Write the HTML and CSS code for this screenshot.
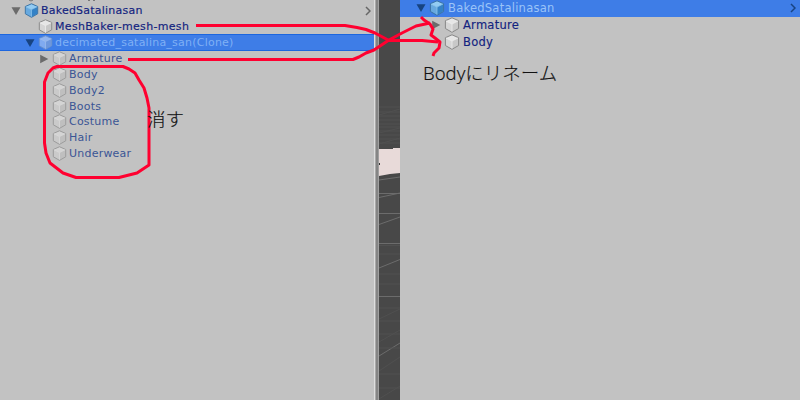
FILE: index.html
```
<!DOCTYPE html>
<html lang="ja">
<head>
<meta charset="utf-8">
<title>Hierarchy</title>
<link rel="stylesheet" href="styles.css">
</head>
<body>
<svg width="0" height="0" class="defs">
  <symbol id="cube" viewBox="0 0 16 16"><path class="body" d="M8 .8 14.6 3.7V11.5L8 15.3 1.4 11.5V3.7Z"/><path class="top" d="M8 1 14.2 3.9 8 7 1.8 3.9Z"/><path class="side" d="M8 7 14.2 3.9V11.3L8 14.9Z"/><path class="edge" d="M8 .8 14.6 3.7V11.5L8 15.3 1.4 11.5V3.7Z"/><path class="line" d="M2 4 8 7 14 4M8 7V14.6"/></symbol>
  <symbol id="down" viewBox="0 0 10 10"><path d="M.5 1.2H9.5L5 9Z"/></symbol>
  <symbol id="right" viewBox="0 0 10 10"><path d="M1.2.8V9.2L9.3 5Z"/></symbol>
  <symbol id="chevron" viewBox="0 0 6 10"><path d="M1 1 5 5 1 9"/></symbol>
</svg>
<main class="screen">
  <section class="panel left">
    <div class="row l0"><svg class="arrow"><use href="#down"/></svg><svg class="cube prefab"><use href="#cube"/></svg><span>BakedSatalinasan</span><svg class="chevron"><use href="#chevron"/></svg></div>
    <div class="row l1"><i class="arrow"></i><svg class="cube"><use href="#cube"/></svg><span class="mesh">MeshBaker-mesh-mesh</span></div>
    <div class="row l1 selected dim"><svg class="arrow"><use href="#down"/></svg><svg class="cube"><use href="#cube"/></svg><span class="clone">decimated_satalina_san(Clone)</span></div>
    <div class="row l2 dim"><svg class="arrow"><use href="#right"/></svg><svg class="cube"><use href="#cube"/></svg><span>Armature</span></div>
    <div class="row l2 dim"><i class="arrow"></i><svg class="cube"><use href="#cube"/></svg><span>Body</span></div>
    <div class="row l2 dim"><i class="arrow"></i><svg class="cube"><use href="#cube"/></svg><span>Body2</span></div>
    <div class="row l2 dim"><i class="arrow"></i><svg class="cube"><use href="#cube"/></svg><span>Boots</span></div>
    <div class="row l2 dim"><i class="arrow"></i><svg class="cube"><use href="#cube"/></svg><span>Costume</span></div>
    <div class="row l2 dim"><i class="arrow"></i><svg class="cube"><use href="#cube"/></svg><span>Hair</span></div>
    <div class="row l2 dim"><i class="arrow"></i><svg class="cube"><use href="#cube"/></svg><span>Underwear</span></div>
  </section>
  <div class="divider"></div>
  <svg class="scene" width="21" height="400" viewBox="379 0 21 400">
    <path class="grid faint" d="M379 107H400M379 112H400M379 116H400M379 120H400M379 124H400M379 127H400M379 131H400M379 135H400M379 139H400M379 143H400M379 115 400 109M379 133 400 128M379 144 400 138"/>
    <path class="plane" d="M379 149H393V148H400V173L390 174 379 176Z"/>
    <path class="mark" d="M379 161v2h1v2h-1z"/>
    <path class="grid" d="M379 180 400 177M379 193.500H400M379 197.500 400 193M379 213.500H400M379 224.500 400 217M379 243.500H400M379 268 400 259.500M379 296.500H400M379 356 400 343"/>
    <path class="grid faint" d="M379 245.500H400M379 254H400M379 274H400M379 284H400M379 308H400M379 321H400M379 334H400M379 348H400M379 374H400M379 388H400M379 319 400 309M379 342 400 330M379 371 400 357M379 399 400 386"/>
  </svg>
  <section class="panel right">
    <div class="row l0 selected"><svg class="arrow"><use href="#down"/></svg><svg class="cube prefab"><use href="#cube"/></svg><span>BakedSatalinasan</span><svg class="chevron"><use href="#chevron"/></svg></div>
    <div class="row l1"><svg class="arrow"><use href="#right"/></svg><svg class="cube"><use href="#cube"/></svg><span>Armature</span></div>
    <div class="row l1"><i class="arrow"></i><svg class="cube"><use href="#cube"/></svg><span>Body</span></div>
  </section>
  <svg class="ink" viewBox="0 0 800 400">
    <path class="cut" d="M29 0 31 1 33 0M88 .5H90M93 .5H95"/>
    <path d="M196 25.500H345L357 27.500 366 29.500 375 33 389 40.500H422L438 42"/>
    <path d="M128 59.500H353L359 57 366 53 374 50 389 40 402 33 416 26 430 23"/>
    <path d="M421 17 424 20 430 24 433 29 431 35 435 38 440 42 439 48 434 53 433 56"/>
    <path d="M57 66.500H123L129 69 135 73 139 80 144 88 147 98 149 108V165L137 173 119 177.500H76L63 173 50 163 46 153 44.500 143V82L48 73 53 68Z"/>
  </svg>
  <p class="note erase">消す</p>
  <p class="note rename">Bodyにリネーム</p>
</main>
</body>
</html>
```
FILE: styles.css
```
body { margin: 0; }
.defs { position: absolute; }
.screen { position: relative; display: flex; width: 800px; height: 400px; overflow: hidden; background: #c2c2c2; font-family: "DejaVu Sans", sans-serif; }
.panel { box-sizing: border-box; height: 400px; }
.left { width: 374px; padding-top: 3px; font-size: 11px; letter-spacing: .22px; }
.right { width: 400px; font-size: 11.500px; letter-spacing: .25px; }
.row { display: flex; align-items: center; height: 15.850px; box-sizing: border-box; color: #12237f; white-space: nowrap; -webkit-text-stroke: .15px; }
.right .row { height: 16.700px; }
.row.l0 { padding-left: 11px; }
.row.l1 { padding-left: 25px; }
.row.l2 { padding-left: 39px; }
.right .row.l0 { padding-left: 16px; }
.right .row.l1 { padding-left: 31px; }
.arrow { width: 10px; height: 10px; flex: none; fill: #6b6b6b; }
.cube { width: 15px; height: 15px; flex: none; margin: 0 2px 0 3px; }
.right .cube { width: 16px; height: 16px; margin-right: 3px; }
.body { fill: var(--face, #d5d5d5); }
.top { fill: var(--top, #e6e6e6); }
.side { fill: var(--side, #c8c8c8); }
.edge { fill: none; stroke: var(--edge, #888); stroke-width: 1; }
.line { fill: none; stroke: var(--line, #ededed); stroke-width: .8; }
.prefab { --face: #67a9df; --top: #93ccf3; --side: #3482c6; --edge: #3b72a4; --line: #8dc4ea; }
.dim { color: #3a5595; -webkit-text-stroke: 0; }
.dim .cube { --face: #cacaca; --top: #d4d4d4; --side: #bfbfbf; --edge: #999; --line: #dadada; }
.row.selected { background: #3e7de7; color: #9bc4f8; -webkit-text-stroke: 0; }
.left .selected { height: 17px; margin: -.5px 0 -.6px; border-top: 1px solid #1c66df; border-bottom: 1px solid #1c66df; color: #80b0f5; }
.selected .arrow { fill: #174381; }
.selected.dim .cube { --face: #80aaf0; --top: #91b5f0; --side: #6d97dd; --edge: #6b91cb; --line: #9dbcec; }
.chevron { width: 6px; height: 10px; margin-left: auto; margin-right: 3px; fill: none; stroke: #666; stroke-width: 1.500; }
.right .chevron { margin-right: 4px; }
.selected .chevron { stroke: #174381; }
.mesh { letter-spacing: .32px; }
.clone { letter-spacing: .23px; }
.divider { width: 5px; background: linear-gradient(90deg, #dedede 0 1px, #a9a9a9 1px 2px, #858585 2px 4px, #a0a0a0 4px); }
.scene { display: block; background: #484848; }
.grid { fill: none; stroke: #6c6c6c; stroke-width: 1; }
.grid.faint { stroke: #505050; }
.plane { fill: #e8dad9; }
.mark { fill: #333; }
.ink { position: absolute; inset: 0; width: 800px; height: 400px; fill: none; stroke: #ff0030; stroke-width: 3; stroke-linejoin: round; }
.ink .cut { stroke: #777; stroke-width: 1; }
.note { position: absolute; margin: 0; color: #111; font: 300 18.500px/24px "Noto Sans", "Noto Sans CJK JP", sans-serif; -webkit-text-stroke: .15px; white-space: nowrap; }
.erase { left: 147px; top: 107px; }
.rename { left: 423px; top: 61px; }
```
